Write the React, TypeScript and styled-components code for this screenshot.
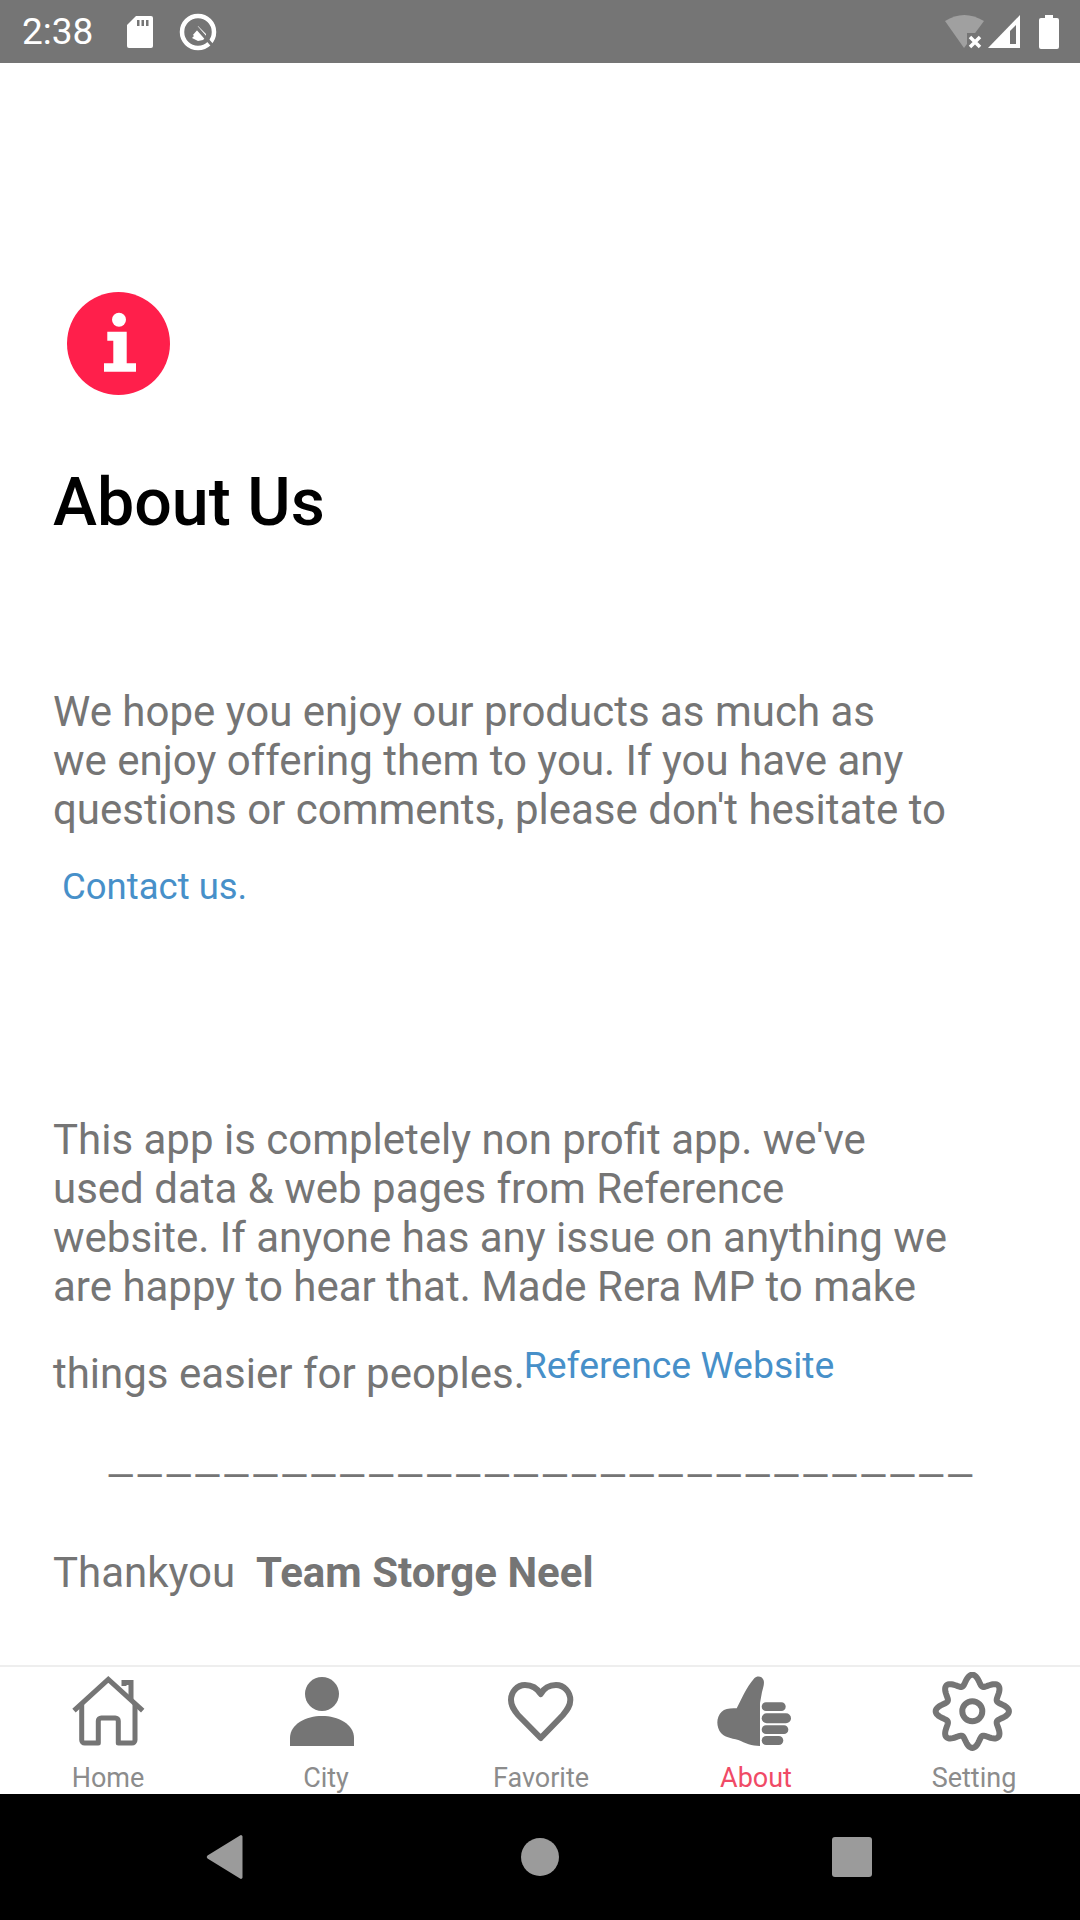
import React from "react";
import styled, { createGlobalStyle } from "styled-components";

const Global = createGlobalStyle`
  html, body { margin: 0; padding: 0; background: #fff; }
  * { box-sizing: border-box; }
`;

const Page = styled.div`
  width: 1080px;
  height: 1920px;
  display: flex;
  flex-direction: column;
  overflow: hidden;
  font-family: Roboto, "Liberation Sans", sans-serif;
  background: #fff;
`;

const StatusBar = styled.header`
  height: 63px;
  flex: none;
  background: #757575;
  display: flex;
  align-items: center;
  justify-content: space-between;
  padding: 0 20px 0 22px;
`;
const StatusGroup = styled.div<{ $gap: number }>`
  display: flex;
  align-items: center;
  gap: ${(p) => p.$gap}px;
`;
const Clock = styled.span`
  color: #fff;
  font-size: 37px;
  line-height: 42px;
  margin-right: 8px;
`;
const BatteryIcon = styled.svg`
  margin-left: 13px;
`;

const Content = styled.main`
  flex: 1;
  min-height: 0;
  padding: 229px 53px 0;
  display: flex;
  flex-direction: column;
  align-items: flex-start;
`;
const InfoBadge = styled.svg`
  width: 103px;
  height: 103px;
  margin-left: 14px;
  flex: none;
`;
const Title = styled.h1`
  margin: 68px 0 0;
  font-size: 66.3px;
  line-height: 78px;
  font-weight: 500;
  color: #000;
`;
const Paragraph = styled.p<{ $top: number }>`
  margin: ${(p) => p.$top}px 0 0;
  font-size: 42px;
  line-height: 49px;
  color: #757575;
  white-space: nowrap;
`;
const Line = styled.span`
  display: block;
`;
const ContactLink = styled.a`
  display: block;
  margin: 32px 0 0 9px;
  font-size: 36.5px;
  line-height: 42px;
  color: #4790c9;
`;
const LastLine = styled.div`
  display: flex;
  align-items: flex-start;
  margin-top: 38px;
  font-size: 42px;
  line-height: 49px;
  color: #757575;
  white-space: nowrap;
`;
const ReferenceLink = styled.a`
  font-size: 37.4px;
  line-height: 42px;
  color: #4790c9;
  margin: -5px 0 0 -1px;
`;
const Rule = styled.div`
  margin: 54px 0 0 53px;
  font-size: 37.1px;
  line-height: 49px;
  color: #757575;
  white-space: nowrap;
`;
const Thanks = styled.p`
  margin: 47px 0 0;
  font-size: 42px;
  line-height: 49px;
  color: #757575;
  white-space: pre;
`;
const Strong = styled.strong`
  font-weight: 700;
`;

const TabBar = styled.nav`
  height: 129px;
  flex: none;
  border-top: 2px solid #eeeeee;
  display: grid;
  grid-template-columns: repeat(5, 216px);
  overflow: hidden;
  background: #fff;
`;
const Tab = styled.div`
  display: flex;
  flex-direction: column;
  align-items: center;
  padding-top: 5px;
`;
const TabIcon = styled.svg`
  width: 80px;
  height: 80px;
  fill: #757575;
  flex: none;
`;
const TabLabel = styled.span<{ $active?: boolean; $nudge?: number }>`
  margin-top: 11px;
  margin-left: ${(p) => p.$nudge ?? 0}px;
  font-size: 27px;
  line-height: 30px;
  color: ${(p) => (p.$active ? "#f04a66" : "#8c8c8c")};
`;

const NavBar = styled.footer`
  height: 126px;
  flex: none;
  background: #000;
  display: grid;
  grid-template-columns: repeat(3, 1fr);
  padding: 0 72px;
  align-items: center;
  justify-items: center;
`;
const NavIcon = styled.svg`
  width: 48px;
  height: 48px;
  fill: #9b9b9b;
`;

const gearPath = (() => {
  const pts: string[] = [];
  for (let i = 0; i < 240; i++) {
    const t = (i / 240) * Math.PI * 2;
    const r = 31.6 + 5 * Math.cos(8 * t);
    pts.push(`${(40.3 + r * Math.sin(t)).toFixed(2)} ${(39.3 - r * Math.cos(t)).toFixed(2)}`);
  }
  return "M" + pts.join("L") + "Z";
})();

const Outline = { fill: "none", stroke: "#757575" } as const;

export default function App() {
  return (
    <Page>
      <Global />
      <StatusBar>
        <StatusGroup $gap={25}>
          <Clock>2:38</Clock>
          <svg width="28" height="34" viewBox="0 0 28 34">
            <path fill="#fff" d="M10 1H25a2 2 0 0 1 2 2V31a2 2 0 0 1-2 2H3a2 2 0 0 1-2-2V10Z" />
            <path fill="#757575" d="M11 5h2.5v6H11zM15.5 5H18v6h-2.5zM20 5h2.5v6H20z" />
          </svg>
          <svg width="38" height="38" viewBox="0 0 38 38">
            <circle cx="19" cy="19" r="16" fill="none" stroke="#fff" strokeWidth="4.5" />
            <path fill="#fff" d="M19 13 L27 21 L27 24 L24 27 L19 27 L12 20Z" />
            <path fill="none" stroke="#757575" strokeWidth="3.2" d="M10 24 L18 15 L33 32" />
            <path fill="#fff" d="M13 25 L18 20 L24 27 L19 28Z" />
          </svg>
        </StatusGroup>
        <StatusGroup $gap={3}>
          <svg width="40" height="34" viewBox="0 0 40 34">
            <path fill="#a0a0a0" d="M0 6 Q19 -6 39 6 L19 33Z" />
            <path fill="#757575" d="M22 18H40V34H22Z" />
            <path stroke="#fff" strokeWidth="3.5" d="M25 22 L35 32 M35 22 L25 32" />
          </svg>
          <svg width="34" height="34" viewBox="0 0 34 34">
            <path fill="#fff" d="M0 33 L32 0 V33Z" />
            <path fill="#757575" d="M22 16 L28 10 V29 H22Z" />
          </svg>
          <BatteryIcon width="22" height="36" viewBox="0 0 22 36">
            <path fill="#fff" d="M7 1H15V4H19a2 2 0 0 1 2 2V33a2 2 0 0 1-2 2H3a2 2 0 0 1-2-2V6a2 2 0 0 1 2-2H7Z" />
          </BatteryIcon>
        </StatusGroup>
      </StatusBar>

      <Content>
        <InfoBadge viewBox="0 0 103 103">
          <circle cx="51.5" cy="51.5" r="51.5" fill="#ff1f4b" />
          <circle cx="52" cy="27.7" r="7" fill="#fff" />
          <path fill="#fff" d="M40.3 39.7H59.7V71.3H69V79.7H37V71.3H46.3V48.7H40.3Z" />
        </InfoBadge>
        <Title>About Us</Title>
        <Paragraph $top={146}>
          <Line>We hope you enjoy our products as much as</Line>
          <Line>we enjoy offering them to you. If you have any</Line>
          <Line>questions or comments, please don't hesitate to</Line>
        </Paragraph>
        <ContactLink>Contact us.</ContactLink>
        <Paragraph $top={207}>
          <Line>This app is completely non profit app. we've</Line>
          <Line>used data &amp; web pages from Reference</Line>
          <Line>website. If anyone has any issue on anything we</Line>
          <Line>are happy to hear that. Made Rera MP to make</Line>
        </Paragraph>
        <LastLine>
          things easier for peoples.
          <ReferenceLink>Reference Website</ReferenceLink>
        </LastLine>
        <Rule>{"—".repeat(30)}</Rule>
        <Thanks>
          {"Thankyou  "}
          <Strong>Team Storge Neel</Strong>
        </Thanks>
      </Content>

      <TabBar>
        <Tab>
          <TabIcon viewBox="0 0 80 80">
            <path {...Outline} strokeWidth="5" d="M6 38.7 L40.3 7.3 L74.7 38.7" />
            <path {...Outline} strokeWidth="5" strokeLinejoin="round" d="M13.7 32V68a3 3 0 0 0 3 3H30.3V49a3 3 0 0 1 3-3H47.3a3 3 0 0 1 3 3V71H64a3 3 0 0 0 3-3V32" />
            <path {...Outline} strokeWidth="5" d="M56 14V10.5H63V28" />
          </TabIcon>
          <TabLabel>Home</TabLabel>
        </Tab>
        <Tab>
          <TabIcon viewBox="0 0 80 80">
            <circle cx="38" cy="22" r="17" />
            <path d="M6 74V66C6 52 22 44 38 44S70 52 70 66V74Z" />
          </TabIcon>
          <TabLabel $nudge={4}>City</TabLabel>
        </Tab>
        <Tab>
          <TabIcon viewBox="0 0 80 80">
            <path {...Outline} strokeWidth="6" strokeLinejoin="round" d="M40.7 22C37 16 31 13 25 13C17 13 11 20 11 28C11 34 14 38 18 43L40.7 66L63 43C67 38 70.3 34 70.3 28C70.3 20 64 13 56 13C50 13 44 16 40.7 22Z" />
          </TabIcon>
          <TabLabel $nudge={2}>Favorite</TabLabel>
        </Tab>
        <Tab>
          <TabIcon viewBox="0 0 80 80">
            <path d="M38.3 6.3C41 3.5 46 4 47.5 8C48.8 11.5 47 16 46 20L44 31V74C36 74 29 71 22.3 68C15 66 8 65 5 61C0 55 0 45 5.7 39.7C9 36.5 14 36 20.7 36.3C25 28 30 16 38.3 6.3Z" />
            <rect x="45.7" y="30.3" width="24" height="8.7" rx="4.3" />
            <rect x="45.7" y="41.3" width="29.3" height="10" rx="5" />
            <rect x="45.7" y="53.3" width="26.6" height="8.7" rx="4.3" />
            <rect x="45.7" y="64" width="21.6" height="9" rx="4.5" />
          </TabIcon>
          <TabLabel $active>About</TabLabel>
        </Tab>
        <Tab>
          <TabIcon viewBox="0 0 80 80">
            <path {...Outline} strokeWidth="6" d={gearPath} />
            <circle {...Outline} strokeWidth="6" cx="40.3" cy="39.3" r="10" />
          </TabIcon>
          <TabLabel $nudge={4}>Setting</TabLabel>
        </Tab>
      </TabBar>

      <NavBar>
        <NavIcon viewBox="0 0 48 48">
          <path d="M32 3.5V44.5a1.5 1.5 0 0 1-2.5 1L-3 25.5a2 2 0 0 1 0-3L29.5 2.5a1.5 1.5 0 0 1 2.5 1Z" transform="translate(6.5 0)" />
        </NavIcon>
        <NavIcon viewBox="0 0 48 48">
          <circle cx="24" cy="24" r="19" />
        </NavIcon>
        <NavIcon viewBox="0 0 48 48">
          <rect x="4" y="4" width="40" height="40" rx="3" />
        </NavIcon>
      </NavBar>
    </Page>
  );
}
